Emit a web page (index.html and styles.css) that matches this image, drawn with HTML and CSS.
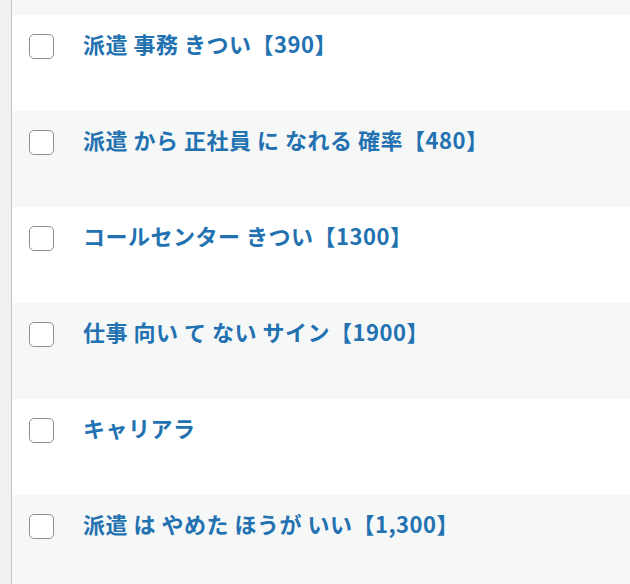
FILE: index.html
```html
<!DOCTYPE html>
<html lang="ja">
<head>
<meta charset="utf-8">
<link rel="stylesheet" href="styles.css">
</head>
<body>
<div class="page">
  <div class="table">
    <div class="row alt cut"></div>
    <div class="row"><span class="cb"></span><a class="title">派遣 事務 きつい【390】</a></div>
    <div class="row alt"><span class="cb"></span><a class="title">派遣 から 正社員 に なれる 確率【480】</a></div>
    <div class="row"><span class="cb"></span><a class="title">コールセンター きつい【1300】</a></div>
    <div class="row alt"><span class="cb"></span><a class="title">仕事 向い て ない サイン【1900】</a></div>
    <div class="row"><span class="cb"></span><a class="title">キャリアラ</a></div>
    <div class="row alt"><span class="cb"></span><a class="title">派遣 は やめた ほうが いい【1,300】</a></div>
  </div>
</div>
</body>
</html>
```

FILE: styles.css
```css
html, body {
  margin: 0;
  padding: 0;
  background: #f0f0f1;
}
.page {
  padding-left: 11px;
  height: 584px;
  overflow: hidden;
}
.table {
  border-left: 1px solid #c3c4c7;
  background: #fff;
  min-height: 584px;
}
.row {
  display: flex;
  align-items: flex-start;
  height: 96px;
  box-sizing: border-box;
  padding: 19px 0 0 17px;
  background: #fff;
}
.row.alt {
  background: #f6f7f7;
}
.row.cut {
  height: 15px;
  padding: 0;
}
.cb {
  width: 25px;
  height: 25px;
  box-sizing: border-box;
  border: 1.5px solid #8c8f94;
  border-radius: 5px;
  background: #fff;
  flex: none;
}
.title {
  margin-left: 29px;
  margin-top: -6px;
  font-family: "Noto Sans CJK JP", "Noto Sans", sans-serif;
  font-weight: 700;
  font-size: 22px;
  letter-spacing: 0.5px;
  line-height: 30px;
  color: #2271b1;
  white-space: nowrap;
}
```
